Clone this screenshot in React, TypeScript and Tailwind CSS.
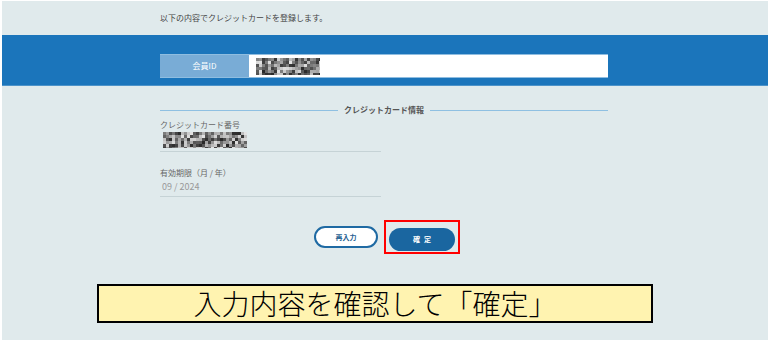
import React from "react";

// deterministic mosaic for masked values
function Mosaic({ w, h, seed }: { w: number; h: number; seed: number }) {
  const cell = 3;
  const cols = Math.ceil(w / cell);
  const rows = Math.ceil(h / cell);
  let s = seed;
  const rnd = () => {
    s = (s * 9301 + 49297) % 233280;
    return s / 233280;
  };
  const rects: React.ReactNode[] = [];
  for (let r = 0; r < rows; r++) {
    for (let c = 0; c < cols; c++) {
      const v = Math.floor(40 + rnd() * 190);
      rects.push(
        <rect key={r + "-" + c} x={c * cell} y={r * cell} width={cell} height={cell} fill={`rgb(${v},${v},${v})`} />
      );
    }
  }
  return (
    <svg width={w} height={h} viewBox={`0 0 ${w} ${h}`} className="block">
      {rects}
    </svg>
  );
}

export default function App() {
  return (
    <div className="w-[768px] h-[341px] overflow-hidden bg-[#e0eaec] border-l-2 border-t border-b border-white font-['Noto_Sans_CJK_JP','Noto_Sans',sans-serif] text-[#555]">
      <div className="h-[34px] flex items-center pl-[158px] text-[8px] text-[#444]">
        以下の内容でクレジットカードを登録します。
      </div>

      <div className="h-[51px] bg-[#1b75bb] pt-[19px] border-b border-[#4d93c9]">
        <div className="w-[448px] ml-[158px] h-[24px] flex">
          <div className="w-[89px] bg-[#79acd6] flex items-center justify-center text-white text-[8px] border-y border-[#8fbde0]">
            会員ID
          </div>
          <div className="flex-1 bg-white border-y border-[#8fbde0] flex items-center pl-[7px]">
            <Mosaic w={64} h={17} seed={7} />
          </div>
        </div>
      </div>

      <div className="w-[448px] ml-[158px]">
        <div className="mt-[20px] flex items-center gap-[6px]">
          <div className="flex-1 h-px bg-[#8fc0e2]" />
          <span className="text-[8px] font-bold text-[#555] leading-none">クレジットカード情報</span>
          <div className="w-[178px] h-px bg-[#8fc0e2]" />
        </div>

        <div className="w-[221px]">
          <div className="mt-[5px] text-[8px] text-[#666] leading-[12px]">クレジットカード番号</div>
          <div className="pl-[3px] pt-[1px] pb-[3px] border-b border-[#c6d3d6]">
            <Mosaic w={84} h={16} seed={31} />
          </div>
          <div className="mt-[15px] text-[8px] text-[#666] leading-[12px]">有効期限（月 / 年）</div>
          <div className="pl-[2px] pt-[2px] pb-[3px] text-[9px] text-[#999] leading-[12px] border-b border-[#c6d3d6]">
            09 / 2024
          </div>
        </div>
      </div>

      <div className="mt-[23px] flex justify-center items-center gap-[6px] ml-[4px]">
        <button className="w-[64px] h-[22px] rounded-full bg-white border-2 border-[#1f6aa3] text-[#1f5f92] text-[7px] font-bold">
          再入力
        </button>
        <div className="border-2 border-[#ff0000] px-[3px] py-[1px]">
          <button className="w-[66px] h-[23px] rounded-full bg-[#1a66a0] text-white text-[7px] font-bold tracking-[4px] pl-[4px]">
            確定
          </button>
        </div>
      </div>

      <div className="mt-[30px] ml-[95px] w-[556px] h-[39px] bg-[#fff3b0] border-2 border-black flex items-center justify-center text-[28px] font-light text-black leading-none font-['Noto_Sans_CJK_JP',sans-serif]">
        入力内容を確認して「確定」
      </div>
    </div>
  );
}
